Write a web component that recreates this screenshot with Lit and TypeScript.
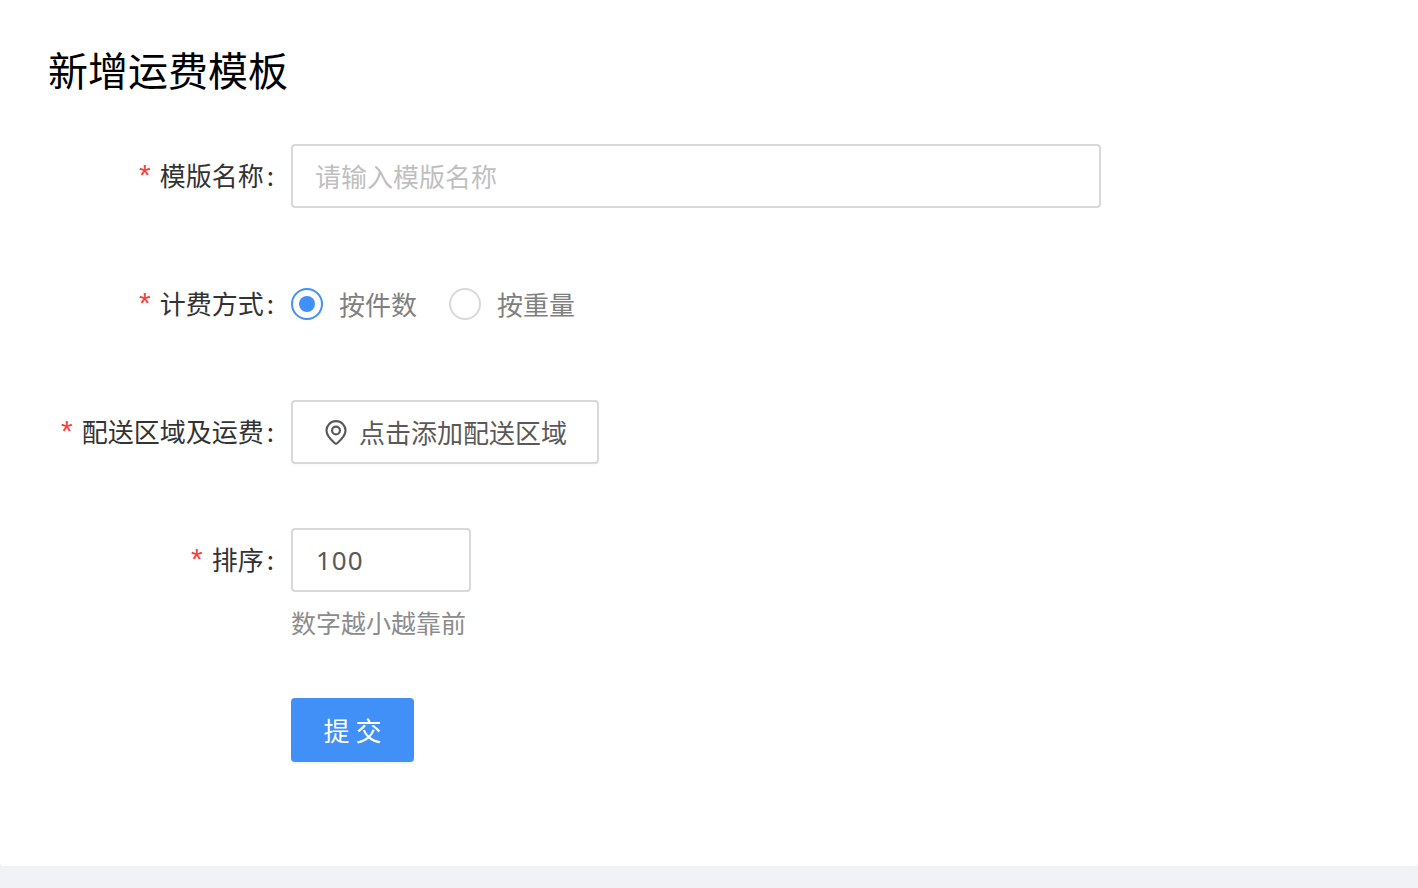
import { LitElement, html, css, svg } from "lit";
import { customElement } from "lit/decorators.js";

const pin = svg`<path d="M11 2C6 2 2.2 5.9 2.2 10.7c0 3.6 2.6 7.3 7.7 11.7.6.5 1.6.5 2.2 0 5.1-4.4 7.7-8.1 7.7-11.7C19.8 5.9 16 2 11 2z" fill="none" stroke="currentColor" stroke-width="2"/><circle cx="11" cy="10.6" r="3.6" fill="none" stroke="currentColor" stroke-width="2"/>`;

@customElement("app-root")
export class AppRoot extends LitElement {
	static override styles = css`
		:host {
			background: #f0f2f5;
			display: block;
			font-family: "Noto Sans CJK SC", "Noto Sans", sans-serif;
			height: 888px;
		}

		.page {
			background: #fff;
			border-radius: 0 0 4px 4px;
			box-sizing: border-box;
			height: 866px;
			padding: 39px 0 0 48px;
		}

		h1 {
			color: #000;
			font-size: 40px;
			font-weight: 400;
			height: 60px;
			line-height: 60px;
			margin: 0 0 45px;
		}

		.row {
			align-items: flex-start;
			display: flex;
			margin-bottom: 64px;
		}

		.label {
			align-items: center;
			box-sizing: border-box;
			color: #333;
			display: flex;
			flex: none;
			font-size: 26px;
			height: 64px;
			justify-content: flex-end;
			margin-left: -48px;
			padding: 0 17px 4px 0;
			white-space: nowrap;
			width: 291px;
		}

		.star {
			color: #f5413d;
			font-family: "Liberation Sans", sans-serif;
			font-size: 30px;
			line-height: 1;
			margin-right: 9px;
			padding-top: 2px;
		}

		.colon {
			margin-left: 3px;
		}

		.control {
			border: 2px solid #d9d9d9;
			border-radius: 4px;
			box-sizing: border-box;
			font-size: 26px;
			height: 64px;
			line-height: 60px;
			padding: 0 22px;
			white-space: nowrap;
		}

		.name {
			color: #bfbfbf;
			width: 810px;
		}

		.radios {
			align-items: center;
			color: #808080;
			display: flex;
			font-size: 26px;
			height: 64px;
		}

		.radio {
			border: 2px solid #d9d9d9;
			border-radius: 50%;
			box-sizing: border-box;
			height: 32px;
			margin-right: 16px;
			width: 32px;
		}

		.radio.on {
			border-color: #4090f7;
			padding: 6px;
		}

		.radio.on::after {
			background: #4090f7;
			border-radius: 50%;
			content: "";
			display: block;
			height: 16px;
			width: 16px;
		}

		.radio-text {
			margin-right: 32px;
			padding-bottom: 2px;
		}

		.area {
			align-items: center;
			box-shadow: 0 2px 0 rgba(0, 0, 0, 0.015);
			color: #595959;
			display: flex;
			gap: 11px;
			padding: 0 0 0 31px;
			width: 308px;
		}

		.area svg {
			flex: none;
			height: 26px;
			width: 24px;
		}

		.sort {
			color: #595959;
			font-family: "Noto Sans", sans-serif;
			letter-spacing: 1px;
			padding-left: 23px;
			width: 180px;
		}

		.hint {
			color: #8c8c8c;
			font-size: 25px;
			line-height: 36px;
			margin-top: 12px;
		}

		.sort-row {
			margin-bottom: 58px;
		}

		.submit {
			background: #4090f7;
			border-radius: 4px;
			box-shadow: 0 2px 0 rgba(0, 0, 0, 0.045);
			color: #fff;
			font-size: 26px;
			height: 64px;
			line-height: 64px;
			margin-left: 243px;
			text-align: center;
			width: 123px;
		}
	`;

	override render() {
		return html`
			<div class="page">
				<h1>新增运费模板</h1>
				<div class="row">
					<div class="label"><span class="star">*</span>模版名称<span class="colon">:</span></div>
					<div class="control name">请输入模版名称</div>
				</div>
				<div class="row">
					<div class="label"><span class="star">*</span>计费方式<span class="colon">:</span></div>
					<div class="radios">
						<span class="radio on"></span><span class="radio-text">按件数</span>
						<span class="radio"></span><span class="radio-text">按重量</span>
					</div>
				</div>
				<div class="row">
					<div class="label"><span class="star">*</span>配送区域及运费<span class="colon">:</span></div>
					<div class="control area"><svg viewBox="0 0 22 24">${pin}</svg><span>点击添加配送区域</span></div>
				</div>
				<div class="row sort-row">
					<div class="label"><span class="star">*</span>排序<span class="colon">:</span></div>
					<div>
						<div class="control sort">100</div>
						<div class="hint">数字越小越靠前</div>
					</div>
				</div>
				<div class="submit">提 交</div>
			</div>
		`;
	}
}
